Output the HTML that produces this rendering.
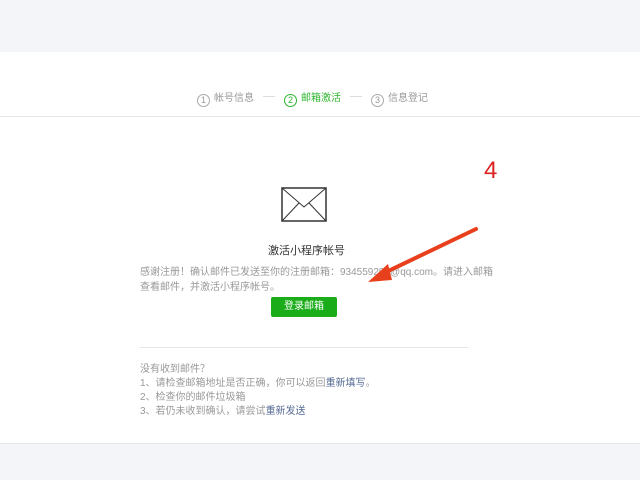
<!DOCTYPE html>
<html><head><meta charset="utf-8"><style>
body{margin:0;width:640px;height:480px;background:#f4f5f9;font-family:"Liberation Sans","Noto Sans CJK SC",sans-serif;position:relative;overflow:hidden}
.top{position:absolute;top:0;left:0;width:640px;height:52px;background:#f4f5f9}
.main{position:absolute;top:52px;left:0;width:640px;height:391px;background:#fff;border-bottom:1px solid #e6e6e6}
.hdr{position:absolute;top:0;left:0;width:640px;height:64px;border-bottom:1px solid #e7e7e7}
.steps{position:absolute;top:40px;left:197px;font-size:10px;color:#999;white-space:nowrap;line-height:14px}
.steps .c{display:inline-block;width:11px;height:11px;border:1px solid #aaa;border-radius:50%;text-align:center;line-height:11px;font-size:9px;vertical-align:-2px;margin-right:4px}
.steps .on{color:#2db52d}.steps .on .c{border-color:#2db52d}
.dash{display:inline-block;width:12px;border-top:1px solid #ddd;vertical-align:4px;margin:0 9px}
.t{position:absolute;font-size:10px;color:#999;white-space:nowrap}
a{color:#576b95;text-decoration:none}
</style></head><body>
<div class="top"></div>
<div class="main">
<div class="hdr"><div class="steps"><span class="c">1</span>帐号信息<span class="dash"></span><span class="on"><span class="c">2</span>邮箱激活</span><span class="dash"></span><span class="c">3</span>信息登记</div></div>
<svg style="position:absolute;left:281px;top:135px" width="46" height="35"><rect x="1" y="1" width="44" height="33" fill="none" stroke="#333" stroke-width="1.5"/><path d="M1 1L23 20L45 1M1 34L18 16M45 34L28 16" fill="none" stroke="#333" stroke-width="1"/></svg>
<div class="t" style="top:190px;left:268px;font-size:11px;color:#333">激活小程序帐号</div>
<div class="t" style="top:211px;left:140px">感谢注册！确认邮件已发送至你的注册邮箱：934559291@qq.com。请进入邮箱</div>
<div class="t" style="top:226px;left:140px">查看邮件，并激活小程序帐号。</div>
<div style="position:absolute;top:245px;left:271px;width:66px;height:20px;background:#1aad19;border-radius:2px;color:#fff;font-size:10px;text-align:center;line-height:20px">登录邮箱</div>
<div style="position:absolute;top:295px;left:140px;width:328px;border-top:1px solid #e7e7e7"></div>
<div class="t" style="top:308px;left:140px">没有收到邮件？</div>
<div class="t" style="top:322px;left:140px">1、请检查邮箱地址是否正确，你可以返回<a>重新填写</a>。</div>
<div class="t" style="top:336px;left:140px">2、检查你的邮件垃圾箱</div>
<div class="t" style="top:350px;left:140px">3、若仍未收到确认，请尝试<a>重新发送</a></div>
</div>
<div style="position:absolute;left:484px;top:157px;color:#d22;font-size:24px">4</div>
<svg style="position:absolute;left:0;top:0" width="640" height="480"><path d="M476 229L380 275" stroke="#e8401c" stroke-width="4" stroke-linecap="round"/><path d="M368 282L388 264L392 280Z" fill="#e8401c"/></svg>
</body></html>
